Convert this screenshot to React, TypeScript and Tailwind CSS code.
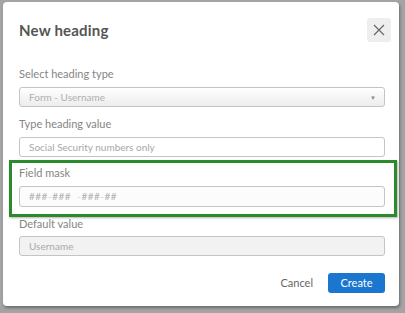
import React from "react";

const font = { fontFamily: "Lato, 'Open Sans', sans-serif" };

function Label({ children }: { children: React.ReactNode }) {
  return <div className="h-[14px] text-[11px] leading-[14px] text-[#858585]">{children}</div>;
}

export default function App() {
  return (
    <div className="w-[405px] h-[313px] bg-[#a4a4a4] relative overflow-hidden" style={font}>
      <div className="absolute left-[3px] top-[2px] w-[396px] h-[304px] bg-white rounded-[4px] shadow-[1px_2px_3px_rgba(0,0,0,0.35)] flex flex-col pl-[16px] pr-[14px]">
        {/* header */}
        <div className="flex items-center justify-between h-[56px]">
          <h2 className="text-[15px] font-bold text-[#555] tracking-[0.2px]">New heading</h2>
          <button className="w-[24px] h-[24px] rounded-[3px] bg-[#eeeeee] flex items-center justify-center -mr-[6px]">
            <svg width="12" height="12" viewBox="0 0 12 12" stroke="#666" strokeWidth="1.2">
              <path d="M1 1 L11 11 M11 1 L1 11" />
            </svg>
          </button>
        </div>

        <div className="flex flex-col mt-[9px]">
          <Label>Select heading type</Label>
          <div className="mt-[6px] h-[20px] rounded-[3px] border border-[#c4c4c4] bg-gradient-to-b from-white to-[#ececec] flex items-center justify-between pl-[9px] pr-[8px]">
            <span className="text-[10px] text-[#b0b0b0]">Form - Username</span>
            <span className="text-[6px] text-[#888]">▼</span>
          </div>
        </div>

        <div className="flex flex-col mt-[10px]">
          <Label>Type heading value</Label>
          <div className="mt-[6px] h-[20px] rounded-[3px] border border-[#c4c4c4] bg-white flex items-center pl-[9px]">
            <span className="text-[10px] text-[#a8a8a8]">Social Security numbers only</span>
          </div>
        </div>

        <div className="flex flex-col mt-[9px] relative">
          <Label>Field mask</Label>
          <div className="mt-[6px] h-[21px] rounded-[3px] border border-[#c4c4c4] bg-[#fcfcfc] flex items-center pl-[9px]">
            <span className="text-[10px] text-[#b0b0b0] tracking-[0.5px]">
              ###<span className="text-[#d4d4d4]">-</span>### &nbsp;<span className="text-[#d4d4d4]">-</span>###<span className="text-[#d4d4d4]">-</span>##
            </span>
          </div>
          <div className="absolute left-[-10px] right-[-12px] top-[-6px] bottom-[-10px] border-[3px] border-[#2b8a2b] shadow-[1px_1px_2px_rgba(0,0,0,0.3)]" />
        </div>

        <div className="flex flex-col mt-[10px]">
          <Label>Default value</Label>
          <div className="mt-[5px] h-[20px] rounded-[3px] border border-[#c4c4c4] bg-[#f2f2f2] flex items-center pl-[9px]">
            <span className="text-[10px] text-[#aaa]">Username</span>
          </div>
        </div>

        <div className="flex items-center justify-end mt-[17px] gap-[15px]">
          <button className="text-[11px] text-[#666]">Cancel</button>
          <button className="w-[57px] h-[20px] rounded-[3px] bg-[#1a76cf] text-white text-[11px]">Create</button>
        </div>
      </div>
    </div>
  );
}
